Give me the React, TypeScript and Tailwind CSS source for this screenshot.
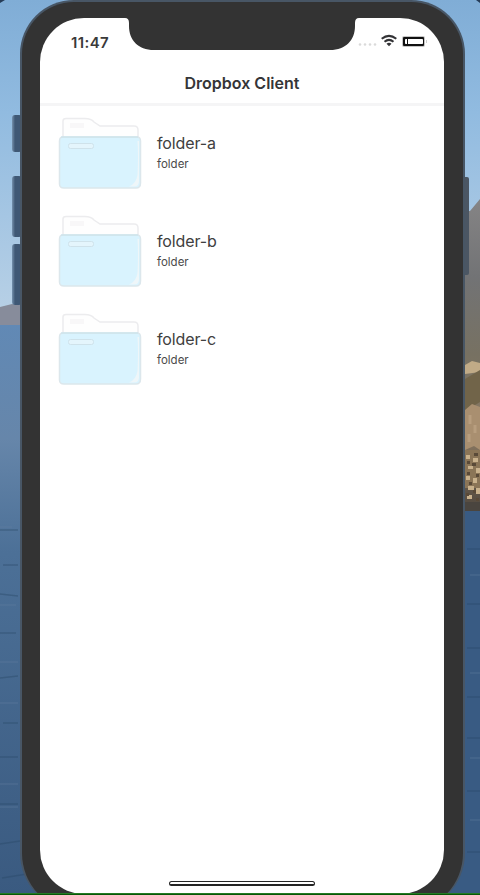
const folders = [
  { name: 'folder-a', kind: 'folder' },
  { name: 'folder-b', kind: 'folder' },
  { name: 'folder-c', kind: 'folder' },
];

function Wallpaper() {
  return (
    <svg className="absolute inset-0" width="480" height="895" viewBox="0 0 480 895" aria-hidden="true">
      <defs>
        <linearGradient id="sky" x1="0" y1="0" x2="0" y2="1">
          <stop offset="0" stopColor="#80add6" />
          <stop offset="0.35" stopColor="#91bbe0" />
          <stop offset="1" stopColor="#b9d1e6" />
        </linearGradient>
        <linearGradient id="sea" x1="0" y1="0" x2="0" y2="1">
          <stop offset="0" stopColor="#6189b5" />
          <stop offset="0.2" stopColor="#6686aa" />
          <stop offset="0.4" stopColor="#4c7097" />
          <stop offset="1" stopColor="#3a5a80" />
        </linearGradient>
        <linearGradient id="rock" x1="0" y1="0" x2="0" y2="1">
          <stop offset="0" stopColor="#858485" />
          <stop offset="0.25" stopColor="#727375" />
          <stop offset="0.5" stopColor="#777162" />
          <stop offset="0.75" stopColor="#8b7963" />
          <stop offset="1" stopColor="#51483e" />
        </linearGradient>
        <linearGradient id="button" x1="0" y1="0" x2="1" y2="0">
          <stop offset="0" stopColor="#7692ae" />
          <stop offset="0.3" stopColor="#3f5875" />
          <stop offset="1" stopColor="#3f5875" />
        </linearGradient>
      </defs>
      <rect width="480" height="320" fill="url(#sky)" />
      <path d="M0 0h5L0 3ZM480 0h-4l4 3Z" fill="#263c57" />
      <path d="M0 307 12 304 40 306V330H0Z" fill="#878c9b" />
      <rect y="325" width="240" height="570" fill="url(#sea)" />
      <rect x="240" y="505" width="240" height="390" fill="#395b83" />
      <path d="M440 211H470L480 199V511H440Z" fill="url(#rock)" />
      <path d="M465 365 472 361 480 363V372L465 374Z" fill="#c1ab87" />
      <path d="M465 379 480 370V402L465 411Z" fill="#716449" />
      <path d="M465 410 472 404 480 407V450L474 446 465 450Z" fill="#a98f70" />
      <path d="M465 450h15v38h-15Z" fill="#8b7557" />
      <path d="M466 455h4v4h-4Zm7 3h5v4h-5Zm-5 8h5v3h-5Zm8 2h4v5h-4Zm-10 8h4v4h-4Zm7 2h4v5h-4Zm-5 8h6v4h-6Zm8 2h4v6h-4Zm-9 7h5v4h-5Z" fill="#c9b18c" />
      <path d="M467 461h3v3h-3Zm7-8h4v3h-4Zm-2 10h4v3h-4Zm-5 9h3v3h-3Zm9 2h3v3h-3Zm-7 8h3v3h-3Zm4 8h3v3h-3Zm-7 3h3v3h-3Zm10 5h3v3h-3Z" fill="#5a4a38" />
      <path d="M470 415v9m5 1v8m-6 1v8" stroke="#c2a889" strokeWidth="3" opacity=".6" />
      <path d="M465 502h15v9h-15Z" fill="#4a453f" />
      <path d="M0 530h18M3 565h15M0 594l18 2M0 633h16M0 678l18-2M3 723h15M0 757h18M0 804h18M0 844l20-3M2 878l25-4M467 549h13M467 604h13M467 648h13M467 697h13M467 738h13M467 791h13M467 852h13" stroke="#294867" strokeWidth="1.5" opacity=".4" />
      <path d="M0 527h12M0 605h16M0 662h18M0 703h18M0 784h18M0 807h18M470 575h10M470 673h10M470 758h10M470 820h10" stroke="#6480a1" strokeWidth="1" opacity=".5" />
      <g fill="url(#button)">
        <rect x="12" y="115" width="10" height="37" rx="3" />
        <rect x="12" y="176" width="10" height="61" rx="3" />
        <rect x="12" y="244" width="10" height="61" rx="3" />
      </g>
      <rect x="460" y="177" width="9" height="98" rx="2" fill="#4b5663" />
    </svg>
  );
}

function FolderIcon() {
  return (
    <svg className="shrink-0" width="84" height="72" viewBox="0 0 84 72" fill="none" aria-hidden="true">
      <path d="M5 20V4Q5 1.5 8 1.5H27Q33 1.5 36 5L42 9H76Q80 9 80 13V20" fill="#fefefe" stroke="#ececee" strokeWidth="1.5" />
      <rect x="12" y="6" width="14" height="5" fill="#f8f7f8" />
      <path d="M5 20H79Q82.5 20 82.5 24V66Q82.5 71 78 71H6Q1.5 71 1.5 67V24Q1.5 20 5 20Z" fill="#d9f3fe" stroke="#dce7ec" strokeWidth="1.5" />
      <path d="M3 20H80" stroke="#c5e1ea" />
      <path d="M79.5 24Q80.5 38 79.5 58 78 67 71 69.5H76Q81 69.5 81 64V24Z" fill="#eef6f9" />
      <rect x="10.5" y="26.5" width="25" height="5" rx="2" fill="#e4f5fc" stroke="#cfe2ea" />
    </svg>
  );
}

function StatusIcons() {
  return (
    <svg width="70" height="14" viewBox="0 0 70 14" fill="none" aria-hidden="true">
      <g fill="#dadada">
        <circle cx="3" cy="10.5" r="1.3" />
        <circle cx="8" cy="10.5" r="1.3" />
        <circle cx="13" cy="10.5" r="1.3" />
        <circle cx="18" cy="10.5" r="1.3" />
      </g>
      <g stroke="#333336" strokeWidth="2">
        <path d="M24.7 4.8Q32 -1 39.3 4.8" />
        <path d="M27.5 7.7Q32 4 36.5 7.7" />
      </g>
      <path d="M29.5 9.7Q32 7.7 34.5 9.7L32 12.2Z" fill="#333336" />
      <rect x="45" y="2" width="23" height="11" rx="2" fill="#c5c5c5" />
      <rect x="46" y="3" width="21" height="9" rx="1" fill="#111" />
      <rect x="48" y="5" width="18" height="5" rx=".8" fill="#fff" />
      <path d="M50.5 5v5" stroke="#111" />
      <path d="M69.5 6v3" stroke="#cfcfcf" />
    </svg>
  );
}

function Notch() {
  return (
    <svg className="absolute left-[85px] top-[-1px]" width="234" height="34" viewBox="0 0 234 34" aria-hidden="true">
      <path d="M0 0H234V1Q230 1 230 6V9C230 23 221 33 205 33H29C13 33 4 23 4 9V6Q4 1 0 1Z" fill="#333" />
    </svg>
  );
}

export default function App() {
  return (
    <div className="relative h-[895px] w-[480px] overflow-hidden bg-[#5c81a8] font-['Inter','Liberation_Sans',sans-serif]">
      <Wallpaper />
      <div className="relative ml-5 h-[911px] w-[445px] rounded-t-[54px] rounded-b-[58px] border-x-2 border-t-2 border-[#485665] bg-[#333] pl-[18px] pt-4">
        <main className="relative h-[876px] w-[404px] rounded-[44px] bg-white">
          <Notch />
          <div className="flex h-[50px] items-start justify-between pl-[31px] pr-[17px] pt-4">
            <span className="text-[15px] font-semibold leading-[18px] tracking-[0.4px] text-[#3a3a3a]">11:47</span>
            <div><StatusIcons /></div>
          </div>
          <header className="flex h-[38px] items-center justify-center border-b-[3px] border-[#f5f5f6] pb-[6px]">
            <h1 className="text-[16px] font-semibold leading-5 text-[#353537]">Dropbox Client</h1>
          </header>
          <ul className="flex flex-col">
            {folders.map((folder) => (
              <li key={folder.name} className="flex h-[98px] items-start gap-[15px] pl-[18px] pt-[11px]">
                <FolderIcon />
                <div className="flex flex-col pt-[15px]">
                  <span className="text-[16px] leading-[22px] tracking-[-0.1px] text-[#404040]">{folder.name}</span>
                  <span className="text-[11.5px] leading-5 text-[#4b4b4b]">{folder.kind}</span>
                </div>
              </li>
            ))}
          </ul>
        </main>
      </div>
      <div className="absolute left-[169px] top-[881px] h-[5px] w-[146px] rounded-[3px] border border-b-2 border-[#252525] bg-white" />
      <div className="absolute inset-x-0 bottom-0 h-[2px] border-t border-[#247a24] bg-[#075707]" />
    </div>
  );
}
